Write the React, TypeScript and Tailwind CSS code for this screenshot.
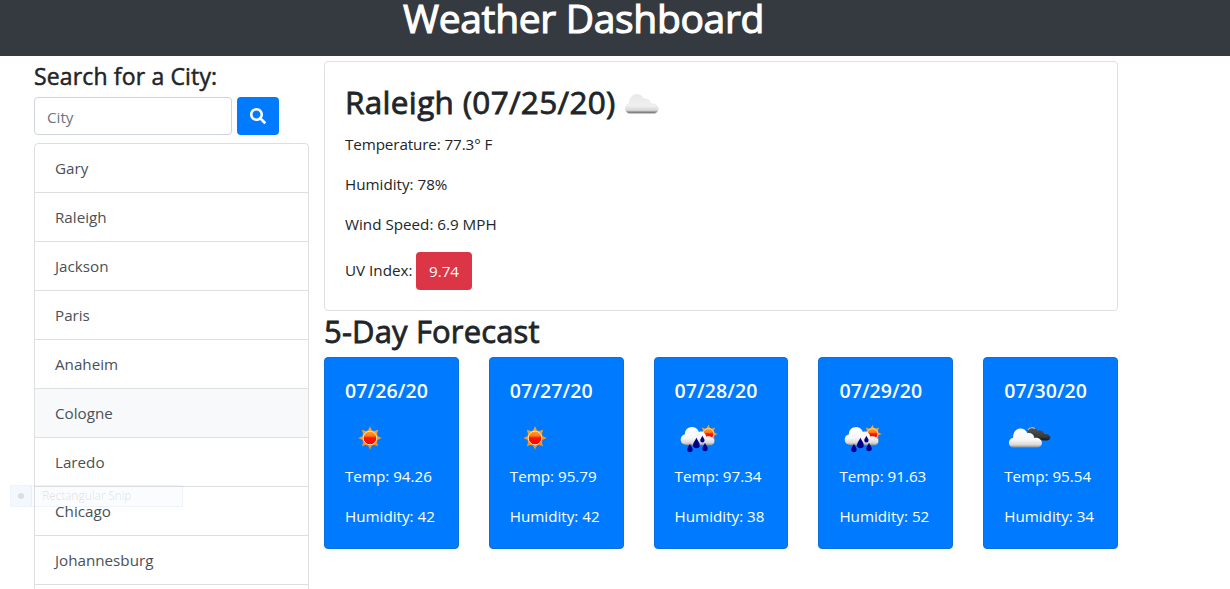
import React from "react";
import { FaSearch } from "react-icons/fa";

const cities = [
  "Gary",
  "Raleigh",
  "Jackson",
  "Paris",
  "Anaheim",
  "Cologne",
  "Laredo",
  "Chicago",
  "Johannesburg",
];

type Sky = "sun" | "rain" | "broken";

const forecast: { date: string; sky: Sky; temp: string; humidity: string }[] = [
  { date: "07/26/20", sky: "sun", temp: "94.26", humidity: "42" },
  { date: "07/27/20", sky: "sun", temp: "95.79", humidity: "42" },
  { date: "07/28/20", sky: "rain", temp: "97.34", humidity: "38" },
  { date: "07/29/20", sky: "rain", temp: "91.63", humidity: "52" },
  { date: "07/30/20", sky: "broken", temp: "95.54", humidity: "34" },
];

function Gradients() {
  return (
    <svg width="0" height="0" className="absolute" aria-hidden="true">
      <defs>
        <linearGradient id="ray" x1="0" y1="0" x2="0" y2="1">
          <stop offset="0" stopColor="#f5a623" />
          <stop offset="1" stopColor="#f08a1c" />
        </linearGradient>
        <linearGradient id="disc" x1="0" y1="0" x2="0" y2="1">
          <stop offset="0" stopColor="#ffa030" />
          <stop offset="0.35" stopColor="#ff7a10" />
          <stop offset="0.48" stopColor="#ff1500" />
          <stop offset="1" stopColor="#fa0500" />
        </linearGradient>
        <linearGradient id="white" x1="0" y1="0" x2="0" y2="1">
          <stop offset="0" stopColor="#ffffff" />
          <stop offset="0.6" stopColor="#f7f7f7" />
          <stop offset="0.85" stopColor="#d9d9d9" />
          <stop offset="1" stopColor="#8a8a8a" />
        </linearGradient>
        <linearGradient id="gray" x1="0" y1="0" x2="0" y2="1">
          <stop offset="0" stopColor="#e9e9e9" />
          <stop offset="0.6" stopColor="#f0f0f0" />
          <stop offset="0.84" stopColor="#d5d5d5" />
          <stop offset="0.92" stopColor="#8a8a8a" />
          <stop offset="1" stopColor="#707070" />
        </linearGradient>
        <linearGradient id="dark" x1="0" y1="0" x2="0" y2="1">
          <stop offset="0" stopColor="#555555" />
          <stop offset="0.7" stopColor="#3a3a3a" />
          <stop offset="1" stopColor="#161616" />
        </linearGradient>
      </defs>
    </svg>
  );
}

function SunShape() {
  return (
    <g>
      <path
        fill="url(#ray)"
        d="M0-11.7 2-7.4 4.4-6.9 8.2-8.2 7-4.4 7.4-2 11.7 0 7.4 2 7 4.4 8.2 8.2 4.4 7 2 7.4 0 11.7-2 7.4-4.4 7-8.2 8.2-7 4.4-7.4 2-11.7 0-7.4-2-7-4.4-8.2-8.2-4.4-6.9-2-7.4Z"
      />
      <circle r="6.8" fill="url(#disc)" stroke="#ffe3b8" strokeWidth="1" />
    </g>
  );
}

const cloudPath =
  "M5 19C2 19 0 17 0 14.2 0 11.6 1.8 9.8 4.2 9.3 4 4 7 0 11.4 0 14.8 0 17.4 2 18.4 4.8 21.5 3.8 25 5.6 25.4 9.4 29.5 8.8 33 11 33 14.4 33 17 31 19 28 19Z";

const drop = "M0-4.5C1-2 2.9-.4 2.9 1.7A2.9 2.9 0 0 1-2.9 1.7C-2.9-.4-1-2 0-4.5Z";

function WeatherIcon({ sky }: { sky: Sky }) {
  return (
    <svg viewBox="0 0 50 50" className="block size-[50px]">
      {sky === "sun" && (
        <g transform="translate(25 25)">
          <SunShape />
        </g>
      )}
      {sky === "rain" && (
        <g transform="translate(.4 0)">
          <g transform="translate(33 21) scale(.8)">
            <SunShape />
          </g>
          <path
            fill="url(#white)"
            d="M11 32C7.500 32 5.300 29.800 5.300 26.600 5.300 24 7 21.800 9.500 21.300 9.500 17 12.500 14 16.500 14 20.200 14 22.600 16.300 23.500 19 27 17.500 30.400 19.800 30.700 23.500 35 22.800 39 25 39 28.200 39 30.600 37 32.500 34 32.500Z"
          />
          <g fill="#00008b">
            <path transform="translate(14.500 35) scale(.95)" d={drop} />
            <path transform="translate(21 30) scale(1.15)" d={drop} />
            <path transform="translate(27 26) scale(.75)" d={drop} />
            <path transform="translate(29.600 34) scale(.95)" d={drop} />
          </g>
        </g>
      )}
      {sky === "broken" && (
        <g transform="translate(.4 0)">
          <path
            fill="url(#dark)"
            d="M23 18C23 16 25.500 14 28 14.200 30.500 14.200 32.500 15.700 33.200 17.800 36.800 16.500 39.300 18.500 39.700 21 43 20.500 46 21.800 46 24.200 46 26 44.500 27.500 42 27.500L30 27Z"
          />
          <path d="M23.500 17C25 14.500 28.500 14 30.500 15.700" fill="none" stroke="#b5b5b5" strokeWidth="1.200" />
          <g transform="translate(4.500 15.500)">
            <path fill="url(#white)" d={cloudPath} />
          </g>
        </g>
      )}
    </svg>
  );
}

function CurrentIcon() {
  return (
    <svg viewBox="0 0 50 50" className="block size-[50px]">
      <g transform="translate(9.300 16.500)">
        <path fill="url(#gray)" d={cloudPath} stroke="#d8d8d8" strokeWidth=".4" />
      </g>
    </svg>
  );
}

export default function App() {
  return (
    <div className="relative h-[589px] w-[1230px] overflow-hidden bg-white font-['Open_Sans','Noto_Sans',sans-serif] text-[15.2px] leading-6 text-[#212529]">
      <Gradients />
      <header className="h-14 bg-[#343a40] pl-[403px]">
        <h1 className="text-[39px] leading-[35px] tracking-[-0.33px] whitespace-nowrap text-white [-webkit-text-stroke:1.1px]">
          Weather Dashboard
        </h1>
      </header>

      <div className="flex pl-[34px]">
        <aside className="w-[275px] shrink-0">
          <h2 className="pt-[6px] text-[23px] leading-[29px] tracking-[0.15px] whitespace-nowrap [-webkit-text-stroke:0.5px]">
            Search for a City:
          </h2>
          <form className="mt-[6px] flex gap-[5px]" onSubmit={(e) => e.preventDefault()}>
            <input
              placeholder="City"
              className="h-[38px] w-[198px] rounded border border-[#ced4da] px-3 pt-[2px] placeholder:text-[#6c757d]"
            />
            <button
              type="submit"
              aria-label="Search"
              className="flex h-[38px] w-[42px] items-center justify-center rounded bg-[#007bff] text-white"
            >
              <FaSearch className="size-4" />
            </button>
          </form>
          <ul className="mt-2 rounded-t border border-[#dfdfdf] pb-2">
            {cities.map((city) => (
              <li
                key={city}
                className={
                  city === "Cologne"
                    ? "h-[49px] border-b border-[#dfdfdf] bg-[#f8f9fa] px-5 py-3 text-[#495057]"
                    : "h-[49px] border-b border-[#dfdfdf] px-5 py-3 text-[#495057]"
                }
              >
                {city}
              </li>
            ))}
          </ul>
        </aside>

        <main className="ml-[15px] w-[794px] shrink-0 pt-[5px]">
          <section className="h-[250px] rounded border border-[#dfdfdf] px-5">
            <div className="flex h-[70px] items-center pt-[12px]">
              <h2 className="mb-[2px] w-[271px] text-[31.5px] leading-[38px] tracking-[0.32px] whitespace-nowrap [-webkit-text-stroke:0.8px]">
                Raleigh (07/25/20)
              </h2>
              <CurrentIcon />
            </div>
            <p className="mb-4 tracking-[-0.1px]">Temperature: 77.3° F</p>
            <p className="mb-4">Humidity: 78%</p>
            <p className="mb-4">Wind Speed: 6.9 MPH</p>
            <div className="flex items-center">
              <span className="mb-[3px] w-[71px] whitespace-nowrap">UV Index:</span>
              <span className="flex h-[38px] w-14 items-center justify-center rounded bg-[#dc3545] text-white">
                9.74
              </span>
            </div>
          </section>

          <h2 className="mb-[7px] pt-px text-[31px] leading-[38px] tracking-[0.15px] [-webkit-text-stroke:0.8px]">
            5-Day Forecast
          </h2>
          <section className="grid grid-cols-5 gap-[30px]">
            {forecast.map((day) => (
              <article
                key={day.date}
                className="h-[192px] rounded border border-[#0d6fd8] bg-[#007bff] px-5 pt-[21px] whitespace-nowrap text-white"
              >
                <h3 className="mb-[10px] text-[19.5px] leading-6 font-semibold tracking-[0.1px]">{day.date}</h3>
                <WeatherIcon sky={day.sky} />
                <p className="mt-[1px] mb-4">Temp: {day.temp}</p>
                <p>Humidity: {day.humidity}</p>
              </article>
            ))}
          </section>
        </main>
      </div>

      <div className="absolute top-[485px] left-[10px] flex h-[22px] w-[173px] items-center border border-[#0078d7]/5 bg-[#0078d7]/2 text-[12px] text-black/10">
        <span className="flex h-full w-[21px] items-center justify-center border-r border-[#0078d7]/5 bg-[#0078d7]/3">
          <span className="size-[6px] rounded-full bg-black/10" />
        </span>
        <span className="pl-[10px] tracking-[-0.3px]">Rectangular Snip</span>
      </div>
    </div>
  );
}
